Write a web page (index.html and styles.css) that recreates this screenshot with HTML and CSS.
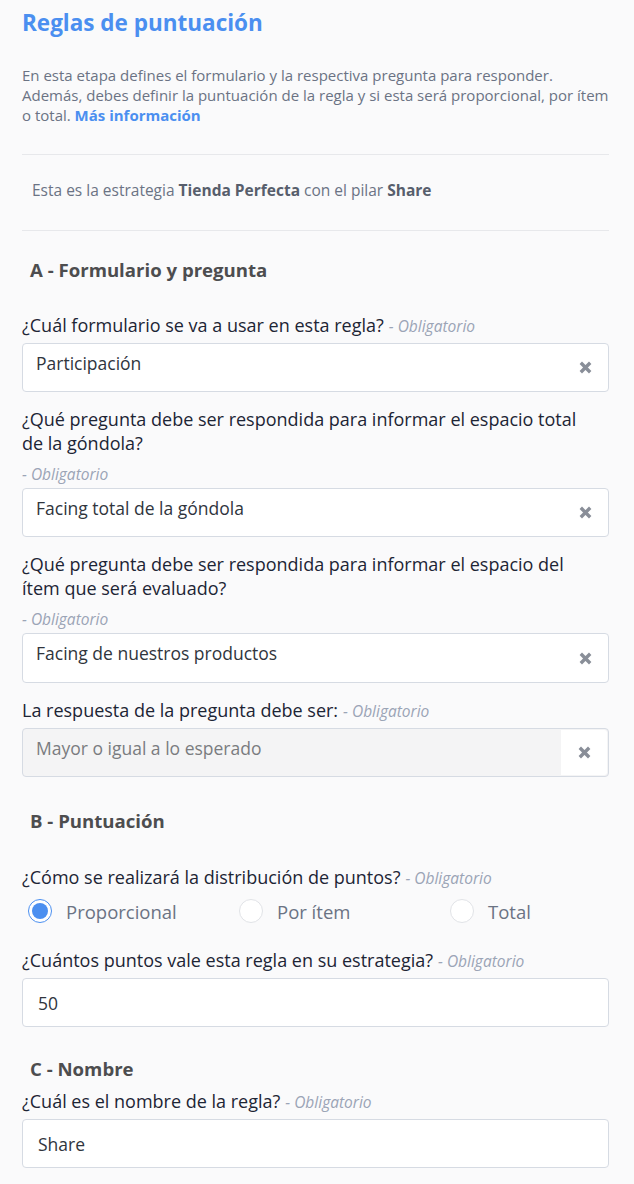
FILE: index.html
```html
<!DOCTYPE html>
<html lang="es">
<head>
<meta charset="utf-8">
<title>Reglas de puntuación</title>
<link rel="stylesheet" href="styles.css">
</head>
<body>
<main class="page">
  <h1 class="title">Reglas de puntuación</h1>
  <p class="intro">En esta etapa defines el formulario y la respectiva pregunta para responder. Además, debes definir la puntuación de la regla y si esta será proporcional, por ítem o total. <a class="link" href="#">Más información</a></p>

  <div class="strategy">Esta es la estrategia <b>Tienda Perfecta</b> con el pilar <b>Share</b></div>

  <h2 class="section-title">A - Formulario y pregunta</h2>

  <div class="field">
    <div class="label"><span class="q">¿Cuál formulario se va a usar en esta regla?</span><span class="req">- Obligatorio</span></div>
    <div class="select"><span class="value">Participación</span><span class="clear"><svg viewBox="0 0 13 13" width="13" height="13"><path d="M1.8 1.8L11.2 11.2M11.2 1.8L1.8 11.2" stroke="currentColor" stroke-width="3.4"/></svg></span></div>
  </div>

  <div class="field">
    <div class="label"><span class="q">¿Qué pregunta debe ser respondida para informar el espacio total de la góndola?</span><span class="req">- Obligatorio</span></div>
    <div class="select"><span class="value">Facing total de la góndola</span><span class="clear"><svg viewBox="0 0 13 13" width="13" height="13"><path d="M1.8 1.8L11.2 11.2M11.2 1.8L1.8 11.2" stroke="currentColor" stroke-width="3.4"/></svg></span></div>
  </div>

  <div class="field">
    <div class="label"><span class="q">¿Qué pregunta debe ser respondida para informar el espacio del ítem que será evaluado?</span><span class="req">- Obligatorio</span></div>
    <div class="select tall"><span class="value">Facing de nuestros productos</span><span class="clear"><svg viewBox="0 0 13 13" width="13" height="13"><path d="M1.8 1.8L11.2 11.2M11.2 1.8L1.8 11.2" stroke="currentColor" stroke-width="3.4"/></svg></span></div>
  </div>

  <div class="field">
    <div class="label"><span class="q">La respuesta de la pregunta debe ser:</span><span class="req">- Obligatorio</span></div>
    <div class="select disabled"><span class="value">Mayor o igual a lo esperado</span><span class="clear boxed"><svg viewBox="0 0 13 13" width="13" height="13"><path d="M1.8 1.8L11.2 11.2M11.2 1.8L1.8 11.2" stroke="currentColor" stroke-width="3.4"/></svg></span></div>
  </div>

  <h2 class="section-title">B - Puntuación</h2>

  <div class="field">
    <div class="label"><span class="q">¿Cómo se realizará la distribución de puntos?</span><span class="req">- Obligatorio</span></div>
    <div class="radios">
      <label class="radio"><span class="dot checked"></span>Proporcional</label>
      <label class="radio"><span class="dot"></span>Por ítem</label>
      <label class="radio"><span class="dot"></span>Total</label>
    </div>
  </div>

  <div class="field">
    <div class="label"><span class="q">¿Cuántos puntos vale esta regla en su estrategia?</span><span class="req">- Obligatorio</span></div>
    <div class="input">50</div>
  </div>

  <h2 class="section-title tight">C - Nombre</h2>

  <div class="field">
    <div class="label"><span class="q">¿Cuál es el nombre de la regla?</span><span class="req">- Obligatorio</span></div>
    <div class="input">Share</div>
  </div>
</main>
</body>
</html>
```
FILE: styles.css
```css
* { box-sizing: border-box; }
html, body { margin: 0; padding: 0; }
body {
  background: #fafafb;
  font-family: "Open Sans", "Noto Sans", sans-serif;
  color: #1d2535;
}
.page {
  padding: 7px 25px 0 22px;
}
.title {
  margin: 0;
  font-size: 22.5px;
  line-height: 32px;
  font-weight: 700;
  color: #4b8ff0;
}
.intro {
  margin: 26px 0 0;
  font-size: 15px;
  line-height: 20px;
  color: #6b7384;
  padding-bottom: 29px;
  border-bottom: 1px solid #e7e8eb;
}
.link {
  color: #4b8ff0;
  font-weight: 700;
  text-decoration: none;
}
.strategy {
  padding: 25px 10px 30px;
  font-size: 15.5px;
  line-height: 20px;
  color: #6b7384;
  border-bottom: 1px solid #e7e8eb;
}
.strategy b { color: #575e6c; }
.section-title {
  margin: 26px 0 30px 8px;
  font-size: 18.6px;
  line-height: 26px;
  font-weight: 700;
  color: #4d4d4f;
}
.field { margin-bottom: 15px; }
.field + .section-title { margin-top: 31px; margin-bottom: 31px; }
.field + .section-title.tight { margin-top: 29px; margin-bottom: 7px; }
.label {
  display: flex;
  flex-wrap: wrap;
  align-items: baseline;
  column-gap: 5px;
  row-gap: 11px;
  margin-bottom: 6px;
  padding-right: 20px;
  font-size: 18px;
  line-height: 24px;
  color: #1d2535;
}
.req {
  font-size: 15.5px;
  line-height: 16px;
  font-style: italic;
  color: #9ba4b6;
}
.select, .input {
  display: flex;
  align-items: flex-start;
  height: 49px;
  background: #fff;
  border: 1px solid #d6dbe3;
  border-radius: 4px;
  font-size: 17.5px;
  color: #30353d;
}
.select .value {
  flex: 1;
  padding: 6px 0 0 13px;
  line-height: 26px;
}
.select.tall { height: 50px; }
.clear {
  width: 46px;
  align-self: stretch;
  display: flex;
  align-items: center;
  justify-content: center;
  color: #898e98;
}
.select.disabled {
  background: #f4f4f5;
  color: #7a7c80;
}
.clear.boxed {
  background: #fff;
  margin: 1px 1px 1px 0;
  border-radius: 0 3px 3px 0;
}
.input {
  align-items: center;
  padding: 0 0 0 15px;
  line-height: 26px;
}
.radios {
  display: grid;
  grid-template-columns: repeat(3, 211px);
  padding: 4px 0 10px 6px;
}
.radio {
  display: flex;
  align-items: center;
  gap: 14px;
  height: 24px;
  font-size: 18.5px;
  color: #6b7384;
}
.dot {
  flex: none;
  width: 24px;
  height: 24px;
  border-radius: 50%;
  border: 1px solid #e1e3e7;
  background: #fff;
  display: flex;
  align-items: center;
  justify-content: center;
}
.dot.checked {
  border: 1.5px solid #4b8ff0;
}
.dot.checked::after {
  content: "";
  width: 16px;
  height: 16px;
  border-radius: 50%;
  background: #4b8ff0;
}
```
